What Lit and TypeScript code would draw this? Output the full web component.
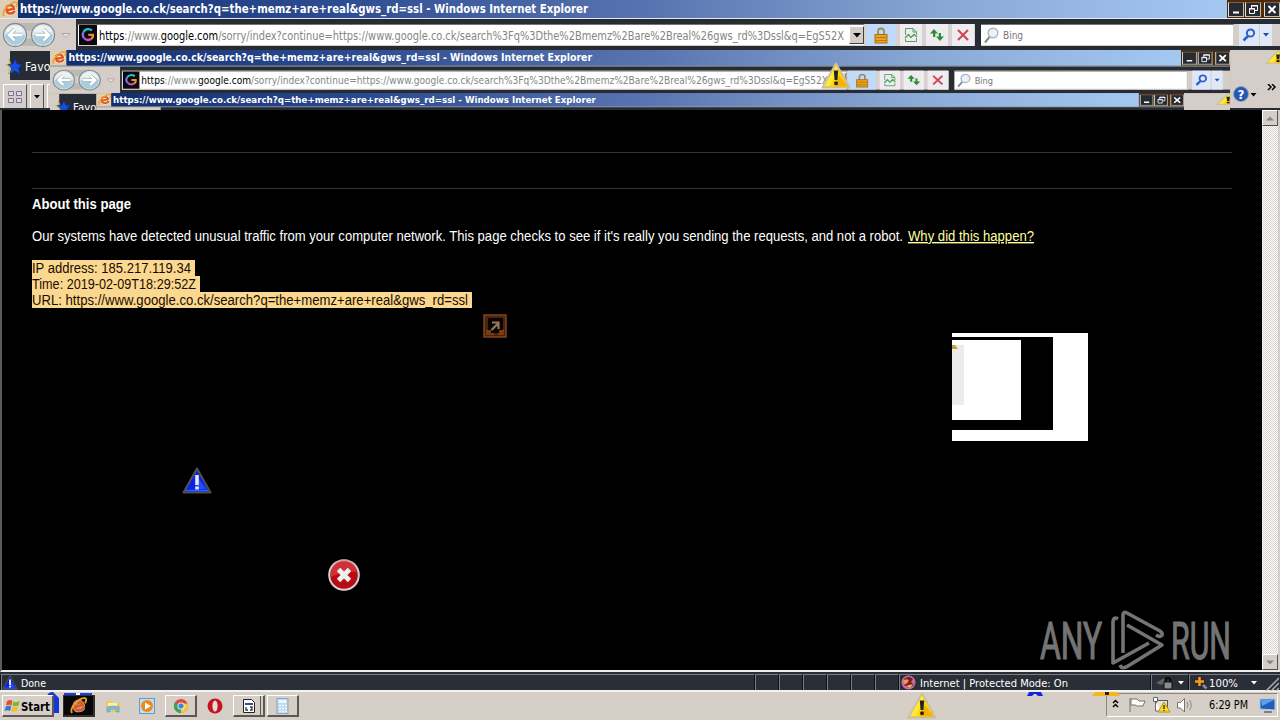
import { LitElement, html, svg, css, nothing } from 'lit';
import { customElement, property } from 'lit/decorators.js';

/** Line of text stretched to a known width */
const fit = (text: unknown, width: number, height: number, baseline: number, cls = '') => html`
  <svg class="fit ${cls}" width=${width + 1} height=${height}>
    <text x="0" y=${baseline} textLength=${width} lengthAdjust="spacingAndGlyphs">${text}</text>
  </svg>`;

const warning = (w: number, h: number) => html`
  <svg width=${w} height=${h} viewBox="0 0 30 27" preserveAspectRatio="none">
    <path d="M15 1.5 28.5 25.5H1.5Z" fill="#ffd800" stroke="#c9bfa0" stroke-width="2" stroke-linejoin="round" />
    <path d="M15 3 17 7 9 24H3Z" fill="#fff04a" opacity=".7" />
    <path d="M18 13 27 24.5H13Z" fill="#f2a900" opacity=".8" />
    <path d="M12.8 8.500h4.400l-.8 9.500h-2.800Z" fill="#222" />
    <rect x="13.2" y="19.5" width="3.6" height="3.5" rx="1" fill="#222" />
  </svg>`;

const blueWarning = (w: number, h: number) => html`
  <svg width=${w} height=${h} viewBox="0 0 30 27" preserveAspectRatio="none">
    <path d="M15 1.5 28.5 25.5H1.5Z" fill="#0a22e8" stroke="#50524a" stroke-width="2" stroke-linejoin="round" />
    <path d="M4 23.5H26" stroke="#2d5cff" stroke-width="1.5" />
    <path d="M17 12 24 22H13Z" fill="#2a62ff" opacity=".7" />
    <path d="M13.2 8h3.6v10h-3.6zM13.2 19.5h3.6v3h-3.6z" fill="#e8ecff" />
  </svg>`;

const ieLogo = (size: number) => html`
  <svg width=${size} height=${size} viewBox="0 0 16 16" fill="none">
    <g transform="rotate(-14 8 8)">
      <path d="M4 8.6H12C12 3 4.600 2.800 4.300 8.300C4 13.500 10.500 13.600 12 10.800" stroke="#fff" stroke-width="3.8" opacity=".7" />
      <path d="M4 8.6H12C12 3 4.600 2.800 4.300 8.300C4 13.500 10.500 13.600 12 10.800" stroke="#e2561c" stroke-width="2.5" />
    </g>
    <path d="M2 15C-1 11 8 .5 14 1C16 1.500 15.300 4 14 6" stroke="#f2a020" stroke-width="1.700" />
  </svg>`;

/**
 * Browser title bar and toolbars. Each level holds a smaller
 * copy of itself, inset by 50px on every side.
 */
@customElement('ie-chrome')
export class IeChrome extends LitElement {
    @property({ type: Number }) depth = 1;

    static styles = css`
    :host {
      display: block;
      position: relative;
      width: 1280px;
      height: 110px;
      overflow: hidden;
      background: #272c34;
      font-family: 'DejaVu Sans', sans-serif;
    }

    svg {
      display: block;
      flex: none;
    }

    .fit {
      overflow: visible;
    }

    .title {
      display: flex;
      height: 18px;
      border-bottom: 1px solid #e6eaf0;
    }

    .title-icon {
      width: 18px;
      padding: 1px 0 0 2px;
      box-sizing: border-box;
      background: #dccfb8;
    }

    .caption {
      flex: 1;
      padding-left: 2px;
      background: linear-gradient(90deg, #12306f, #2c4a90 25%, #5874b0 52%, #8aaad6 78%, #a4c8f2);
    }

    .caption text {
      fill: #fff;
      font-weight: bold;
      font-size: 11.5px;
    }

    .controls {
      display: flex;
      align-items: center;
      width: 53px;
      gap: 1px;
      padding-left: 1px;
      box-sizing: border-box;
      background: #4e2a08;
    }

    .control {
      width: 14px;
      height: 13px;
      background: #262a32;
      border: 1px solid #c8b8a4;
      border-top-color: #77614c;
      border-left-color: #e8e0d8;
    }

    .control.close {
      margin-left: 2px;
    }

    .bar {
      display: flex;
      height: 31px;
    }

    .nav {
      display: flex;
      align-items: center;
      width: 76px;
      background: #d5cec8;
    }

    .address {
      display: flex;
      width: 786px;
      height: 22px;
      margin: 5px 0 0 2px;
      box-sizing: border-box;
      background: #fff;
      border-top: 1px solid #77736e;
      border-bottom: 1px solid #d5cec8;
    }

    .site {
      width: 18px;
      margin-left: 1px;
      background: #0a0a0c;
    }

    .url {
      flex: 1;
      overflow: hidden;
      padding-left: 2px;
    }

    .url text {
      font-size: 11.5px;
      fill: #858585;
    }

    .strong {
      fill: #000;
    }

    .drop {
      display: flex;
      align-items: center;
      justify-content: center;
      width: 13px;
      margin: 1px 0;
      background: #d5cec8;
      border: 1px solid #fff;
      border-right-color: #404040;
      border-bottom-color: #404040;
    }

    .tools {
      display: flex;
      width: 111px;
      height: 22px;
      margin-top: 5px;
      gap: 4px;
      background: #d9d1d0;
    }

    .tool {
      display: flex;
      align-items: center;
      justify-content: center;
      width: 22px;
      height: 22px;
      background: #eeecf0;
    }

    .tool.lock {
      width: 30px;
      margin-left: 2px;
      background: #c2dafa;
    }

    .search {
      display: flex;
      align-items: center;
      width: 253px;
      height: 22px;
      margin: 5px 0 0 6px;
      box-sizing: border-box;
      gap: 4px;
      padding-left: 3px;
      background: #fff;
      border-top: 1px solid #77736e;
      border-bottom: 1px solid #d5cec8;
      border-right: 1px solid #d5cec8;
    }

    .search text {
      font-size: 11px;
      fill: #777;
    }

    .go {
      display: flex;
      flex: 1;
      height: 22px;
      margin-top: 5px;
      padding-left: 5px;
      gap: 1px;
      background: #d5cec8;
    }

    .go div {
      display: flex;
      align-items: center;
      justify-content: center;
      width: 20px;
      background: #e0e8f8;
    }

    .go .more {
      width: 12px;
    }

    .lower {
      display: flex;
      justify-content: space-between;
      height: 58px;
      background: #d5cec8;
    }

    .left {
      width: 200px;
    }

    .favorites {
      display: flex;
      align-items: center;
      height: 29px;
      margin: 1px 0 0 10px;
      background: #272c34;
    }

    .star {
      margin: 2px 1px 0 -5px;
    }

    .favorites text {
      fill: #fff;
      font-size: 12px;
    }

    .tabs {
      display: flex;
      gap: 3px;
      padding: 4px 0 0 3px;
    }

    .tab {
      display: flex;
      align-items: center;
      justify-content: center;
      width: 22px;
      height: 23px;
      border-right: 1px solid #55504c;
      border-left: 1px solid #fff;
      border-top: 1px solid #fff;
    }

    .tab.narrow {
      width: 12px;
    }

    .right {
      display: flex;
      flex-direction: column;
      width: 50px;
      overflow: hidden;
    }

    .corner {
      height: 34px;
      padding-left: 35px;
    }

    .help {
      display: flex;
      gap: 3px;
      padding-left: 3px;
    }

    .inner {
      position: absolute;
      left: 50px;
      top: 50px;
      transform-origin: 0 0;
      transform: scale(0.9219, 0.8611);
    }
  `;

    render() {
        return html`
      <div class="title">
        <div class="title-icon">${ieLogo(16)}</div>
        <div class="caption">
          ${fit('https://www.google.co.ck/search?q=the+memz+are+real&gws_rd=ssl - Windows Internet Explorer', 568, 18, 13)}
        </div>
        <div class="controls">
          <div class="control"><svg width="14" height="13"><path d="M4 9.5h6" stroke="#fff" stroke-width="2" /></svg></div>
          <div class="control"><svg width="14" height="13" fill="none" stroke="#fff">
            <path d="M5.5 5V2.500h6v5H9M5 3h7M3.500 5.500h5v5h-5zM3 6h6" /></svg></div>
          <div class="control close"><svg width="14" height="13"><path d="M3.500 3 10.500 10M10.500 3 3.500 10" stroke="#fff" stroke-width="2" /></svg></div>
        </div>
      </div>

      <div class="bar">
        <div class="nav">
          <svg width="76" height="31" fill="none">
            <path d="M15 4H43V9Q29 15 15 9ZM15 27H43V22Q29 17 15 22Z" fill="#bcb9b4" />
            ${[15, 43].map((x) => svg`
              <circle cx=${x} cy="16" r="11.5" fill="#dce6ea" stroke="#858b8e" stroke-width="1.3" />
              <path d=${`M${x - 10} 16a10 10 0 0 0 20 0Z`} fill="#a9cede" />
              <path d=${`M${x - 9} 13a9.500 9.500 0 0 1 18 0Z`} fill="#eef2f3" />`)}
            <path d="M22 16H9M14.5 10.5 9 16 14.5 21.5M36 16H49M43.5 10.5 49 16 43.5 21.5" stroke="#8aa4b0" stroke-width="4" />
            <path d="M22 16H9M14.5 10.5 9 16 14.5 21.5M36 16H49M43.5 10.5 49 16 43.5 21.5" stroke="#fff" stroke-width="2.8" />
            <path d="M62 14.5h8L66 18.5Z" fill="#e8e5e2" stroke="#aaa5a0" />
          </svg>
        </div>
        <div class="address">
          <div class="site">
            <svg width="18" height="20" fill="none" stroke-width="2.2">
              <path d="M13 5.5A5.500 5.500 0 0 0 4.500 7" stroke="#25c3d0" />
              <path d="M4.5 7A5.500 5.500 0 0 0 5 13" stroke="#8a6cf0" />
              <path d="M5 13A5.500 5.500 0 0 0 12 14" stroke="#d54cc4" />
              <path d="M12 14Q14.500 12.500 14 9.800H9.300" stroke="#e89030" />
            </svg>
          </div>
          <div class="url">
            ${fit(svg`<tspan class="strong">https</tspan>://www.<tspan class="strong">google.com</tspan>/sorry/index?continue=https://www.google.co.ck/search%3Fq%3Dthe%2Bmemz%2Bare%2Breal%26gws_rd%3Dssl&q=EgS52X`, 745, 20, 15)}
          </div>
          <div class="drop"><svg width="8" height="5"><path d="M0 0h8L4 4.500Z" /></svg></div>
        </div>
        <div class="tools">
          <div class="tool lock">
            <svg width="14" height="17"><path d="M4 8V4.500a3 3 0 0 1 6 0V8" fill="none" stroke="#9a8a5c" stroke-width="1.800" />
              <rect x="1" y="7.500" width="12" height="8.500" fill="#eaa51c" stroke="#a87010" />
              <path d="M1.500 10.500h11M1.500 13.500h11" stroke="#b9790c" /></svg>
          </div>
          <div class="tool">
            <svg width="14" height="16" fill="none" stroke="#58a058"><path d="M1.500 8V1.500H9L12.500 5V8M9 1.500V5h3.500M1.500 12V14.500h11V11" />
              <path d="M1 11 4.500 7.500 7 10.500 10 7.500 13 10" stroke-width="1.500" /></svg>
          </div>
          <div class="tool">
            <svg width="16" height="16" fill="#2e8f35"><path d="M5 2 9 6.500H6.300V10H4V6.500H1Z" /><path d="M11 14 7 9.500H9.700V6H12V9.500h3Z" /></svg>
          </div>
          <div class="tool">
            <svg width="14" height="14"><path d="M2 2 12 12M12 2 2 12" stroke="#cf4a50" stroke-width="2.200" /></svg>
          </div>
        </div>
        <div class="search">
          <svg width="15" height="17" fill="none"><circle cx="9" cy="6" r="4.800" fill="#e8f2fa" stroke="#a8b4be" stroke-width="1.400" /><path d="M5.500 10 1 15.500" stroke="#888" stroke-width="2" /></svg>
          ${fit('Bing', 20, 20, 14)}
        </div>
        <div class="go">
          <div><svg width="14" height="14" fill="none" stroke="#2c5fd0" stroke-width="2"><circle cx="8.500" cy="5" r="3.600" /><path d="M6 8 1.500 12.500" stroke-width="2.500" /></svg></div>
          <div class="more"><svg width="6" height="4"><path d="M0 0h6L3 3.500Z" fill="#1a4fa0" /></svg></div>
        </div>
      </div>

      <div class="lower">
        <div class="left">
          <div class="favorites">
            <svg class="star" width="19" height="17">
              <path d="M4 1 6 6 1 6.500 5 10 3 16 8 13Z" fill="#f2dc3a" stroke="#b8a040" stroke-width=".6" />
              <path d="M10 1 12 6 17 6.500 13.500 10 15 16 9.500 12.800 5 16 6.500 10 3 6.500 8 6Z" fill="#1450e0" stroke="#0b2fa8" stroke-width=".7" />
            </svg>
            ${fit('Favorites', 50, 20, 15)}
          </div>
          <div class="tabs">
            <div class="tab"><svg width="16" height="14" fill="#dcdcea" stroke="#77768a"><path d="M1.500 1.500h5v4h-5zM9.500 1.500h5v4h-5zM1.500 8.500h5v4h-5zM9.500 8.500h5v4h-5z" /></svg></div>
            <div class="tab narrow"><svg width="6" height="4"><path d="M0 0h6L3 3.500Z" /></svg></div>
            <div class="tab"></div>
          </div>
        </div>
        <div class="right">
          <div class="corner">${warning(26, 14)}</div>
          <div class="help">
            <svg width="46" height="22">
              <circle cx="8" cy="10" r="7.500" fill="#2458b4" stroke="#8fa0bc" />
              <text x="4.500" y="14.500" fill="#fff" font-size="12" font-weight="bold">?</text>
              <path d="M17.500 9h6L20.500 12.500Z" />
              <path d="M35 0 38 3 35 6M39 0 42 3 39 6" fill="none" stroke="#000" stroke-width="1.500" />
            </svg>
          </div>
        </div>
      </div>
      ${this.depth < 3 ? html`<ie-chrome class="inner" .depth=${this.depth + 1}></ie-chrome>` : nothing}
    `;
    }
}

/**
 * Desktop with the browser, status bar and taskbar
 */
@customElement('app-root')
export class AppRoot extends LitElement {
    static styles = css`
    :host {
      display: flex;
      flex-direction: column;
      position: relative;
      width: 1280px;
      height: 720px;
      overflow: hidden;
      background: #000;
      font-family: 'DejaVu Sans', sans-serif;
    }

    svg {
      display: block;
      flex: none;
    }

    .fit {
      overflow: visible;
    }

    .view {
      display: flex;
      height: 562px;
      border-left: 2px solid #5c5c5c;
      border-bottom: 2px solid #f0eeec;
      box-sizing: border-box;
    }

    .page {
      flex: 1;
      padding: 42px 30px 0;
      font-family: 'Liberation Sans', sans-serif;
    }

    .rule {
      height: 1px;
      margin-bottom: 35px;
      background: #343434;
    }

    .rule.last {
      margin-bottom: 7px;
    }

    .page text {
      fill: #fff;
      font-size: 14px;
    }

    .heading text {
      font-weight: bold;
    }

    .para {
      display: flex;
      gap: 4px;
      margin: 16px 0;
    }

    .page .link text {
      fill: #ffffa0;
      text-decoration: underline;
    }

    .mark {
      width: fit-content;
      padding-right: 3px;
      background: #fbd88f;
    }

    .page .mark text {
      fill: #1c0c00;
    }

    .scroll {
      display: flex;
      flex-direction: column;
      justify-content: space-between;
      width: 16px;
      border-right: 2px solid #d5cec8;
      background: repeating-conic-gradient(#fff 0 25%, #d8d2cc 0 50%) 0 0 / 2px 2px;
    }

    .arrow {
      display: flex;
      align-items: center;
      justify-content: center;
      width: 14px;
      height: 14px;
      background: #d5cec8;
      border: 1px solid #fff;
      border-right-color: #55504c;
      border-bottom-color: #55504c;
    }

    .status {
      display: flex;
      height: 20px;
      background: #2a2e36;
      border-bottom: 2px solid #f4f2f0;
      box-sizing: border-box;
    }

    .cell {
      display: flex;
      align-items: center;
      width: 24px;
      box-sizing: border-box;
      margin-top: 2px;
      border-left: 1px solid #0e1014;
      border-top: 1px solid #787c82;
      box-shadow: inset 1px 0 #787c82;
    }

    .cell text {
      fill: #fff;
      font-size: 11px;
    }

    .done {
      width: 754px;
      gap: 3px;
      padding-left: 1px;
    }

    .zone {
      width: 252px;
      gap: 4px;
      padding-left: 2px;
    }

    .secure {
      width: 38px;
      gap: 4px;
      padding-left: 5px;
    }

    .zoom {
      flex: 1;
      gap: 1px;
      padding-left: 5px;
    }

    .caret {
      margin: 0 3px 0 11px;
    }

    .taskbar {
      display: flex;
      flex: 1;
      padding: 3px 2px 0;
      background: #d6cfc8;
    }

    .button {
      display: flex;
      align-items: center;
      justify-content: center;
      width: 32px;
      height: 22px;
      margin-right: 2px;
      box-sizing: border-box;
      background: #d6cfc8;
      border: 1px solid #fff;
      border-right: 2px solid #5c5753;
      border-bottom: 2px solid #5c5753;
    }

    .start {
      width: 52px;
      margin-right: 9px;
      z-index: 1;
    }

    .start text {
      font-size: 12px;
      font-weight: bold;
    }

    .active {
      background: #080808;
      border-color: #303030;
      z-index: 1;
    }

    .quick {
      display: flex;
      align-items: center;
      justify-content: center;
      width: 34px;
      height: 22px;
    }

    .quick svg {
      margin-right: 2px;
    }

    .stacked {
      box-shadow: inset -2px 0 #d6cfc8, inset -3px 0 #5c5753;
    }

    .tray {
      display: flex;
      align-items: center;
      width: 172px;
      height: 24px;
      margin: -2px 0 0 auto;
      box-sizing: border-box;
      padding-left: 5px;
      border: 1px solid #8c8680;
      border-right-color: #fff;
      border-bottom-color: #fff;
    }

    .clock {
      margin: 0 7px 0 5px;
    }

    .tray text {
      font-size: 11.5px;
    }

    .float {
      position: absolute;
    }

    .popup {
      left: 483px;
      top: 314px;
    }

    .alert-blue {
      left: 182px;
      top: 467px;
    }

    .error {
      left: 328px;
      top: 559px;
    }

    .fragment {
      left: 952px;
      top: 333px;
    }

    .alert-top {
      left: 821px;
      top: 62px;
    }

    .alert-bottom {
      left: 907px;
      top: 692px;
    }

    .traces {
      left: 0;
      top: 691px;
    }

    .watermark {
      left: 1036px;
      top: 606px;
    }

    .watermark text {
      fill: #747474;
      stroke: #747474;
      stroke-width: 1.2px;
      font-family: Roboto, sans-serif;
      font-size: 52px;
    }
  `;

    renderPage() {
        return html`
      <div class="page">
        <div class="rule"></div>
        <div class="rule last"></div>
        <div class="heading">${fit('About this page', 99, 16, 13)}</div>
        <div class="para">
          ${fit("Our systems have detected unusual traffic from your computer network. This page checks to see if it's really you sending the requests, and not a robot.", 871, 16, 13)}
          ${fit('Why did this happen?', 126, 16, 13, 'link')}
        </div>
        <div class="mark">${fit('IP address: 185.217.119.34', 159, 16, 13)}</div>
        <div class="mark">${fit('Time: 2019-02-09T18:29:52Z', 164, 16, 13)}</div>
        <div class="mark">${fit('URL: https://www.google.co.ck/search?q=the+memz+are+real&gws_rd=ssl', 436, 16, 13)}</div>
      </div>
    `;
    }

    renderStatus() {
        return html`
      <div class="status">
        <div class="cell done">${blueWarning(16, 15)}${fit('Done', 25, 16, 12)}</div>
        ${[1, 2, 3, 4, 5, 6].map(() => html`<div class="cell"></div>`)}
        <div class="cell zone">
          <svg width="15" height="15"><circle cx="7.500" cy="7.500" r="7" fill="#c86a9c" /><path d="M3 4Q8 0 12 4L10 7 13 10 8 13 3 10 7 8Z" fill="#7a1c28" /><path d="M2 6 6 4 8 6 4 9Z" fill="#f0a040" /><path d="M5 11 12 9 9 13Z" fill="#f4b860" /></svg>
          ${fit('Internet | Protected Mode: On', 148, 16, 12)}
        </div>
        <div class="cell secure">
          <svg width="18" height="14"><path d="M0 7 8 2 9 7 5 9Z" fill="#606468" /><path d="M9.500 7V5a2.500 3 0 0 1 5 0V7" fill="none" stroke="#0a0a0a" stroke-width="2" /><rect x="8" y="6" width="8" height="7" fill="#8c8c8c" stroke="#111" /></svg>
          <svg width="6" height="4"><path d="M0 0h6L3 3.500Z" fill="#fff" /></svg>
        </div>
        <div class="cell zoom">
          <svg width="14" height="14"><path d="M8 8 12.500 12.500" stroke="#8090b0" stroke-width="2.500" /><circle cx="5.500" cy="5.500" r="5" fill="#3c2410" /><path d="M5.500 1v9M1 5.500h9" stroke="#f49a30" stroke-width="2.500" /></svg>
          ${fit('100%', 29, 16, 12)}
          <svg class="caret" width="6" height="4"><path d="M0 0h6L3 3.500Z" fill="#fff" /></svg>
          <svg width="18" height="16"><path d="M5 16 18 3M10 16 18 8M15 16 18 13" stroke="#b0b0b0" stroke-width="1.500" /></svg>
        </div>
      </div>
    `;
    }

    renderTaskbar() {
        return html`
      <div class="taskbar">
        <div class="button start">
          <svg width="17" height="16"><path d="M3 3Q6 1 8.500 3L7.500 7.500Q5 6 2 7.500Z" fill="#e8502c" /><path d="M9.500 3.500Q12 5 15.500 3L14.500 7.500Q11.500 9 8.500 7.500Z" fill="#78b830" /><path d="M1.800 8.500Q5 7 7.300 8.500L6 13Q3.500 11.500 .5 13Z" fill="#3478d8" /><path d="M8.300 8.800Q11 10 14.200 8.500L13 13Q10 14.500 7 13Z" fill="#f4be28" /></svg>
          ${fit('Start', 29, 16, 13)}
        </div>
        <div class="button active">${ieLogo(17)}</div>
        <div class="quick"><svg width="16" height="16"><path d="M1 3h5l2 2h7v9H1Z" fill="#efc95c" /><path d="M3 5h9v5H3Z" fill="#fff0a8" /><path d="M2 14V9q6-2 12 0v5h-3v-3H5v3Z" fill="#79bfdf" stroke="#5a9cc4" stroke-width=".6" /></svg></div>
        <div class="quick"><svg width="16" height="16"><rect x=".5" y=".5" width="15" height="15" fill="#c0ddf4" stroke="#5c9cd0" /><circle cx="8" cy="8" r="6" fill="#f08818" /><path d="M6 4.500 12 8 6 11.500Z" fill="#fff" /></svg></div>
        <div class="button">
          <svg width="16" height="16"><circle cx="8" cy="8" r="7" fill="#e24838" /><path d="M8 8 1.900 4.500A7 7 0 0 0 8 15Z" fill="#38a455" /><path d="M8 15A7 7 0 0 0 14.500 5.500H8Z" fill="#f5cc38" /><circle cx="8" cy="8" r="3.500" fill="#fff" /><circle cx="8" cy="8" r="2.700" fill="#4880e0" /></svg>
        </div>
        <div class="quick"><svg width="16" height="16"><circle cx="8" cy="8" r="7.500" fill="#c41420" /><ellipse cx="8" cy="8" rx="2.600" ry="5.500" fill="#e8dcd8" /></svg></div>
        <div class="button stacked"><svg width="14" height="16"><path d="M1.500 1.500h8l3 3v10h-11Z" fill="#fff" stroke="#222" /><path d="M3 5h8v2H3Z" fill="#2850a8" /><path d="M4 9v3h2M8 9h2v3H8" fill="none" stroke="#333" stroke-width="1.300" /></svg></div>
        <div class="button"><svg width="14" height="16"><rect x="1" y=".5" width="11" height="15" fill="#bcd8ea" stroke="#88a8be" /><path d="M2.500 2h8v3h-8Z" fill="#eaf6ff" /><path d="M3 7.500h8M3 10.500h8M3 13.500h8" stroke="#f6fbff" stroke-width="1.500" stroke-dasharray="2 1" /></svg></div>
        <div class="tray">
          <svg width="92" height="20" fill="none">
            <path d="M1 8 3.500 5.500 6 8M1 12 3.500 9.500 6 12" stroke="#000" stroke-width="1.500" />
            <path d="M18 3V17M19 4h6l2 2h6L31 11H25L23 10H19Z" fill="#fff" stroke="#77736e" />
            <rect x="44.500" y="5.500" width="11" height="9" fill="#e8e4e0" stroke="#555" />
            <path d="M41.500 2.500h4v4h-4zM43.500 6V16h5" fill="#fff" stroke="#666" />
            <path d="M52 7 58 17H46Z" fill="#ffd820" stroke="#b89210" /><path d="M52 10v4M52 15v1" stroke="#222" stroke-width="1.300" />
            <path d="M65.500 7.500h3l4-4V17l-4-4h-3Z" fill="#fff" stroke="#77736e" />
            <path d="M75 7Q77 10 75 13M77.500 5Q81 10 77.500 15" stroke="#8c8884" />
          </svg>
          ${fit('6:29 PM', 39, 20, 14, 'clock')}
          <svg width="20" height="18"><path d="M4 3h15V14L4 13Z" fill="#1c60b8" stroke="#b0c8e4" /><path d="M5 4h13L6 10Z" fill="#5aa0ea" /><path d="M8 16h8" stroke="#333" /></svg>
        </div>
      </div>
    `;
    }

    render() {
        return html`
      <ie-chrome></ie-chrome>
      <div class="view">
        ${this.renderPage()}
        <div class="scroll">
          <div class="arrow"><svg width="8" height="5"><path d="M0 4.500h8L4 .5Z" fill="#8a8580" /></svg></div>
          <div class="arrow"><svg width="8" height="5"><path d="M0 .5h8L4 4.500Z" fill="#8a8580" /></svg></div>
        </div>
      </div>
      ${this.renderStatus()}
      ${this.renderTaskbar()}

      <div class="float popup">
        <svg width="24" height="24" fill="none"><rect x="1" y="1" width="22" height="22" fill="#4c2408" stroke="#7c4420" stroke-width="1.500" /><path d="M16 15h5v6h-6v-4h-4v4H3v-5h5v-1Z" fill="#7a3c0c" /><path d="M5 4h15v12h-4v3H8v-3H5Z" fill="#080604" /><path d="M8.500 16 14.500 10M9 8.500h6.500V15" stroke="#9a7a56" stroke-width="2.200" /></svg>
      </div>
      <div class="float alert-blue">${blueWarning(30, 27)}</div>
      <div class="float error">
        <svg width="32" height="32"><circle cx="16" cy="16" r="14.800" fill="#b80c14" stroke="#d8d0d0" stroke-width="2" /><path d="M3 14a13 13 0 0 1 26-1Q16 12 3 18Z" fill="#e05858" opacity=".5" /><path d="M10.500 10.500 21.500 21.500M21.500 10.500 10.500 21.500" stroke="#ecefef" stroke-width="4.800" /></svg>
      </div>
      <div class="float fragment">
        <svg width="136" height="108"><path d="M0 0h136v108H0Z" fill="#fff" /><path d="M0 4h101v93H0Z" fill="#000" /><path d="M0 7h69v80H0Z" fill="#fff" /><path d="M0 12h12v60H0Z" fill="#ececec" /><path d="M0 12h3l3 4H0Z" fill="#c8a030" /></svg>
      </div>
      <div class="float alert-top">${warning(30, 27)}</div>
      <div class="float traces">
        <svg width="1280" height="24">
          <path d="M47 5Q48 1 53 1L59 7V22H54V5Z" fill="#1238d8" />
          <path d="M64 2h28v3H64Z" fill="#1440e8" /><path d="M76 2h4v2h-4z" fill="#fff" />
          <path d="M1029 1h12l2 4h-5l-2-2h-2l-2 2h-5Z" fill="#1228d8" />
          <path d="M1095 1h22l3 4h-28Z" fill="#f2b81c" /><path d="M1105 1h4v3h-4z" fill="#222" />
        </svg>
      </div>
      <div class="float alert-bottom">${warning(30, 27)}</div>
      <div class="float watermark">
        <svg width="200" height="66" fill="none">
          <text x="4" y="53" textLength="62" lengthAdjust="spacingAndGlyphs">ANY</text>
          <g stroke="#747474" stroke-width="3.600" stroke-linejoin="round">
            <path d="M82 13Q77 10 77 17V57L113 37" />
            <path d="M87 47V9Q87 5 91 7L124 25Q128 28 125 30 123 31 120 29" />
            <path d="M91 19 126 39 92 60Q86 64 84 59" />
          </g>
          <text x="135" y="53" textLength="60" lengthAdjust="spacingAndGlyphs">RUN</text>
        </svg>
      </div>
    `;
    }
}
